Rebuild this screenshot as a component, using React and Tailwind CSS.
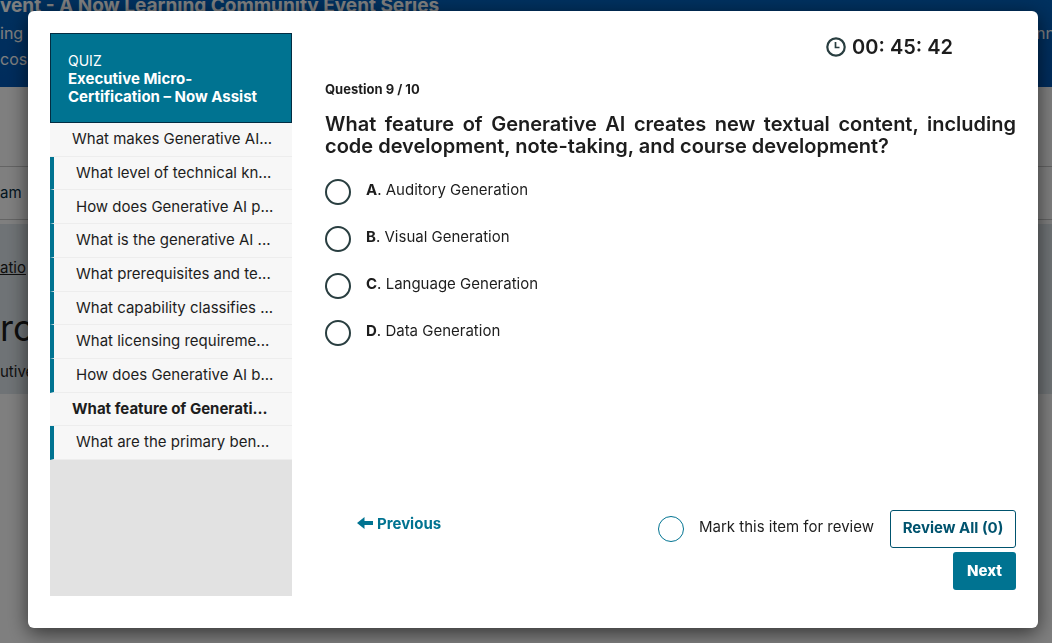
import { useState } from 'react';
import clsx from 'clsx';

const questions = [
  { id: 1, label: 'What makes Generative AI...', visited: true },
  { id: 2, label: 'What level of technical kn...' },
  { id: 3, label: 'How does Generative AI p...' },
  { id: 4, label: 'What is the generative AI ...' },
  { id: 5, label: 'What prerequisites and te...' },
  { id: 6, label: 'What capability classifies ...' },
  { id: 7, label: 'What licensing requireme...' },
  { id: 8, label: 'How does Generative AI b...' },
  { id: 9, label: 'What feature of Generati...', current: true },
  { id: 10, label: 'What are the primary ben...' },
];

const options = [
  { key: 'A', text: 'Auditory Generation' },
  { key: 'B', text: 'Visual Generation' },
  { key: 'C', text: 'Language Generation' },
  { key: 'D', text: 'Data Generation' },
];

function ClockIcon() {
  return (
    <svg width="20" height="20" viewBox="0 0 20 20" fill="none" stroke="#293e40" aria-hidden="true">
      <circle cx="10" cy="10" r="8.7" strokeWidth="2.2" />
      <path d="M9.5 5v5.5H13.5" strokeWidth="1.7" />
    </svg>
  );
}

function ArrowLeftIcon() {
  return (
    <svg width="16" height="14" viewBox="0 0 16 14" fill="currentColor" aria-hidden="true">
      <path d="M0 6 7.5 0V4H16V8H7.5V12Z" />
    </svg>
  );
}

function PageBehind() {
  return (
    <div className="flex h-screen flex-col overflow-hidden bg-white text-[#1d1d1d]" aria-hidden="true">
      <div className="h-[87px] bg-linear-to-b from-[#0062be] to-[#0058b8] whitespace-nowrap text-white">
        <p className="-mt-2 text-[19px] leading-7 font-bold">vent - A Now Learning Community Event Series</p>
        <div className="flex justify-between text-base leading-[26px]">
          <span>ing</span>
          <span className="w-4">nn</span>
        </div>
        <p className="text-base leading-[26px]">cos</p>
      </div>
      <div className="h-20 border-b border-[#c8c8c8]" />
      <div className="flex h-[53px] items-center border-b border-[#c8c8c8] text-[15px] text-[#032d42]">am</div>
      <div className="mt-1 flex h-[170px] flex-col bg-[#dfe7ec] pt-8">
        <span className="text-[15px] leading-6 underline">atio</span>
        <span className="mt-5 text-4xl leading-[56px]">ro</span>
        <span className="text-[15px] leading-8">utive</span>
      </div>
    </div>
  );
}

function Sidebar() {
  return (
    <aside className="w-[242px] shrink-0 bg-[#e2e2e2]">
      <div className="flex h-[90px] flex-col justify-center border border-[#032d42] bg-[#007391] px-[17px] pt-[2px] text-white">
        <p className="text-sm leading-[18px]">QUIZ</p>
        <h2 className="text-[15px] leading-[18px] font-bold">Executive Micro-<br />Certification – Now Assist</h2>
      </div>
      <ul className="flex h-[337px] flex-col bg-[#f7f7f7]">
        {questions.map((q) => (
          <li
            key={q.id}
            className={clsx(
              'flex flex-1 border-b border-b-[#ededed]',
              !q.visited && !q.current && 'border-l-4 border-l-[#007391]',
            )}
          >
            <button
              className={clsx(
                'w-full pl-[22px] text-left text-[15px] whitespace-nowrap text-[#1d1d1d]',
                q.current && 'font-bold',
              )}
            >
              {q.label}
            </button>
          </li>
        ))}
      </ul>
    </aside>
  );
}

export default function App() {
  const [answer, setAnswer] = useState(null);
  const [marked, setMarked] = useState(false);

  return (
    <div className="font-['Inter',sans-serif]">
      <PageBehind />
      <div className="fixed inset-0 flex bg-black/50 pt-[11px] pr-[14px] pb-[15px] pl-7">
        <div
          role="dialog"
          aria-label="Quiz"
          className="flex flex-1 gap-[33px] rounded-md bg-white px-[22px] pt-[22px] pb-8 text-[#1d1d1d] shadow-[0_5px_20px_rgba(0,0,0,0.6)]"
        >
          <Sidebar />

          <main className="flex min-w-0 flex-1 flex-col">
            <div className="flex h-7 items-center justify-end gap-[6px] pr-[63px] text-xl font-semibold">
              <ClockIcon />
              <span>00: 45: 42</span>
            </div>

            <p className="mt-5 text-[13px] leading-4 font-bold">Question 9 / 10</p>

            <fieldset className="mt-4">
              <legend className="w-full text-justify text-xl leading-[22px] font-semibold">
                What feature of Generative AI creates new textual content, including code development, note-taking, and course development?
              </legend>
              <div className="mt-[22px] flex flex-col gap-[21px]">
                {options.map((o) => (
                  <label key={o.key} className="flex items-center gap-[15px] text-[15px] leading-[22px]">
                    <input
                      type="radio"
                      name="answer"
                      checked={answer === o.key}
                      onChange={() => setAnswer(o.key)}
                      className="size-[26px] shrink-0 appearance-none rounded-full border-2 border-[#293e40] checked:bg-[#293e40]"
                    />
                    <span className="pb-1"><b>{o.key}</b>. {o.text}</span>
                  </label>
                ))}
              </div>
            </fieldset>

            <div className="mt-auto flex items-start justify-between pb-[6px] pl-8">
              <button className="mt-[3px] flex items-center gap-1 text-[15px] leading-[22px] font-bold text-[#007391]">
                <ArrowLeftIcon />
                Previous
              </button>
              <div className="flex flex-col items-end gap-1">
                <div className="flex items-center gap-4">
                  <label className="flex items-center gap-[15px] text-[15px]">
                    <input
                      type="checkbox"
                      checked={marked}
                      onChange={(e) => setMarked(e.target.checked)}
                      className="size-[26px] appearance-none rounded-full border border-[#007391] checked:bg-[#007391]"
                    />
                    <span className="pb-[3px]">Mark this item for review</span>
                  </label>
                  <button className="h-[38px] w-[126px] rounded-[3px] border border-[#00536e] pb-[2px] text-[15px] font-bold text-[#00536e]">
                    Review All (0)
                  </button>
                </div>
                <button className="h-[38px] w-[63px] rounded-[3px] bg-[#007391] text-[15px] font-extrabold text-white">
                  Next
                </button>
              </div>
            </div>
          </main>
        </div>
      </div>
    </div>
  );
}
